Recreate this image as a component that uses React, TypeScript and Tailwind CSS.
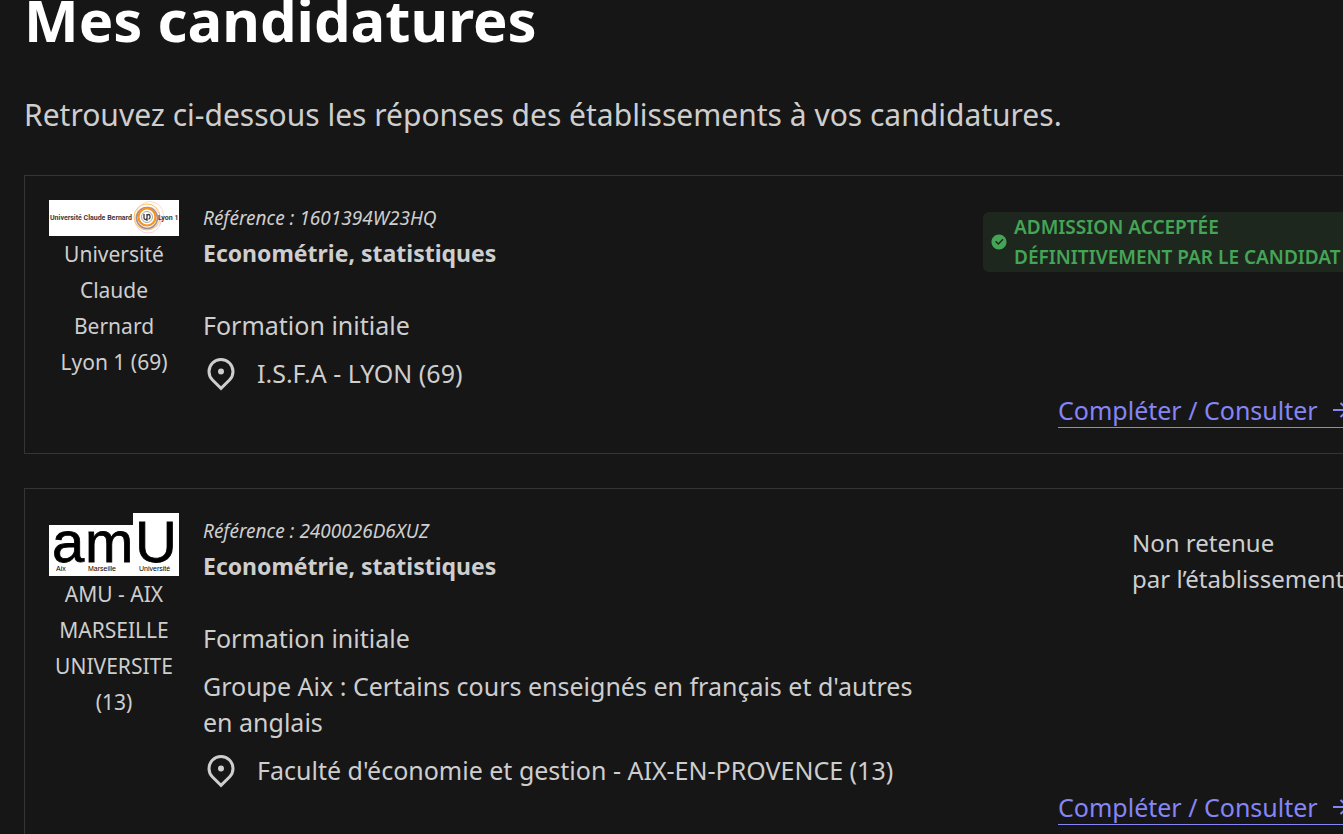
import { FC, ReactNode } from 'react';

interface Candidature {
  reference: string;
  title: string;
  groupe?: string;
  place: string;
  school: string;
  logo: ReactNode;
  status: ReactNode;
}

const LogoLyon = () => (
  <svg viewBox="0 0 130 36" className="block w-full" role="img" aria-label="Université Claude Bernard Lyon 1">
    <rect width="130" height="36" fill="#fff" />
    <g fill="none">
      <circle cx="98" cy="17" r="13" stroke="#f9b233" strokeWidth="0.8" />
      <circle cx="101" cy="15" r="13.5" stroke="#fbc8a4" strokeWidth="0.6" />
      <circle cx="99" cy="20" r="13" stroke="#f4b6cf" strokeWidth="0.6" />
      <circle cx="98" cy="18" r="10.5" stroke="#a58f96" strokeWidth="1.6" />
      <circle cx="98" cy="17" r="8.5" stroke="#f7941d" strokeWidth="2.2" />
      <circle cx="98" cy="17" r="5.5" stroke="#8f8f96" strokeWidth="0.8" />
    </g>
    <g fill="#3a3a3f" fontFamily="Roboto, 'Liberation Sans', sans-serif" fontWeight="700" fontSize="7">
      <text x="1" y="20">Université Claude Bernard</text>
      <text x="109" y="20">Lyon 1</text>
    </g>
    <path
      d="M95 14v4q0 1.5 1.5 1.5t1.500-1.500V14M98 21v-5q0-1.500 1.500-1.500t1.500 1.500v1.500q0 1.500-1.500 1.500"
      fill="none"
      stroke="#3a3a3f"
      strokeWidth="1.3"
    />
  </svg>
);

const LogoAmu = () => (
  <svg
    viewBox="0 0 130 63"
    className="block w-full overflow-visible"
    role="img"
    aria-label="Aix Marseille Université"
  >
    <path d="M0 12H84V0H130V63H0Z" fill="#fff" />
    <g fill="#000" fontFamily="'Liberation Sans', Arial, sans-serif">
      <g fontSize="58" stroke="#000" strokeWidth="0.8">
        <text x="3" y="49">a</text>
        <text x="36" y="49">m</text>
        <text x="86" y="49">U</text>
      </g>
      <g fontSize="7">
        <text x="7" y="58">Aix</text>
        <text x="39" y="58">Marseille</text>
        <text x="90" y="58">Université</text>
      </g>
    </g>
  </svg>
);

const PinIcon = () => (
  <svg viewBox="0 0 24 24" className="size-9 shrink-0" fill="currentColor" aria-hidden="true">
    <path d="M12 20.9l4.95-4.95a7 7 0 1 0-9.9 0L12 20.9zm0 2.828l-6.364-6.364a9 9 0 1 1 12.728 0L12 23.728zM12 13a2 2 0 1 1 0-4 2 2 0 0 1 0 4z" />
  </svg>
);

const ArrowIcon = () => (
  <svg viewBox="0 0 24 24" className="size-6 shrink-0" fill="currentColor" aria-hidden="true">
    <path d="M16.172 11l-5.364-5.364 1.414-1.414L20 12l-7.778 7.778-1.414-1.414L16.172 13H4v-2z" />
  </svg>
);

const CheckIcon = () => (
  <svg viewBox="0 0 24 24" className="size-[18px] shrink-0" fill="currentColor" aria-hidden="true">
    <path d="M12 22C6.477 22 2 17.523 2 12S6.477 2 12 2s10 4.477 10 10-4.477 10-10 10zm-.997-6l7.07-7.071-1.414-1.414-5.656 5.657-2.829-2.829-1.414 1.414L11.003 16z" />
  </svg>
);

const candidatures: Candidature[] = [
  {
    reference: '1601394W23HQ',
    title: 'Econométrie, statistiques',
    place: 'I.S.F.A - LYON (69)',
    school: 'Université Claude Bernard Lyon 1 (69)',
    logo: <LogoLyon />,
    status: (
      <p className="mt-3 flex w-[370px] items-center gap-[6px] rounded-md bg-[#1e271e] px-[7px] text-[19px] leading-[30px] font-semibold whitespace-nowrap text-[#45a557] uppercase">
        <CheckIcon />
        <span>
          Admission acceptée
          <br />
          définitivement par le candidat
        </span>
      </p>
    ),
  },
  {
    reference: '2400026D6XUZ',
    title: 'Econométrie, statistiques',
    groupe: "Groupe Aix : Certains cours enseignés en français et d'autres en anglais",
    place: "Faculté d'économie et gestion - AIX-EN-PROVENCE (13)",
    school: 'AMU - AIX MARSEILLE UNIVERSITE (13)',
    logo: <LogoAmu />,
    status: (
      <p className="mt-3 w-[221px] text-[24px] whitespace-nowrap">
        Non retenue
        <br />
        par l’établissement
      </p>
    ),
  },
];

const CandidatureCard: FC<{ candidature: Candidature }> = ({ candidature }) => (
  <article className="flex gap-6 border border-[#353535] px-6 pt-6 pb-[23px]">
    <div className="w-[130px] shrink-0">
      {candidature.logo}
      <p className="text-center text-[21px]">{candidature.school}</p>
    </div>
    <div className="min-w-0 flex-1">
      <div className="flex justify-between gap-6">
        <div className="w-[720px]">
          <p className="text-[19px] leading-9 italic">Référence : {candidature.reference}</p>
          <h2 className="text-[23px] leading-[35px] font-bold">{candidature.title}</h2>
          <p className="mt-9">Formation initiale</p>
          {candidature.groupe && <p className="mt-3">{candidature.groupe}</p>}
          <p className="mt-3 flex gap-[18px]">
            <PinIcon />
            {candidature.place}
          </p>
        </div>
        <div className="shrink-0">{candidature.status}</div>
      </div>
      <div className="flex justify-end py-0.5">
        <a
          href="#"
          className="flex w-[295px] items-center justify-between border-b border-[#8585f6] leading-[34px] whitespace-nowrap text-[#8585f6]"
        >
          Compléter / Consulter
          <ArrowIcon />
        </a>
      </div>
    </div>
  </article>
);

export default function App() {
  return (
    <main className="h-screen overflow-hidden bg-[#161616] px-6 font-['Noto_Sans',sans-serif] text-[25px] leading-9 text-[#cecece]">
      <h1 className="-mt-4 text-[58px] leading-[72px] font-bold text-white">Mes candidatures</h1>
      <p className="mt-[35px] text-[30px] leading-[48px]">
        Retrouvez ci-dessous les réponses des établissements à vos candidatures.
      </p>
      {/* La liste déborde à droite de la fenêtre */}
      <section className="mt-9 -mr-[59px] flex flex-col gap-[34px]">
        {candidatures.map((candidature) => (
          <CandidatureCard key={candidature.reference} candidature={candidature} />
        ))}
      </section>
    </main>
  );
}
